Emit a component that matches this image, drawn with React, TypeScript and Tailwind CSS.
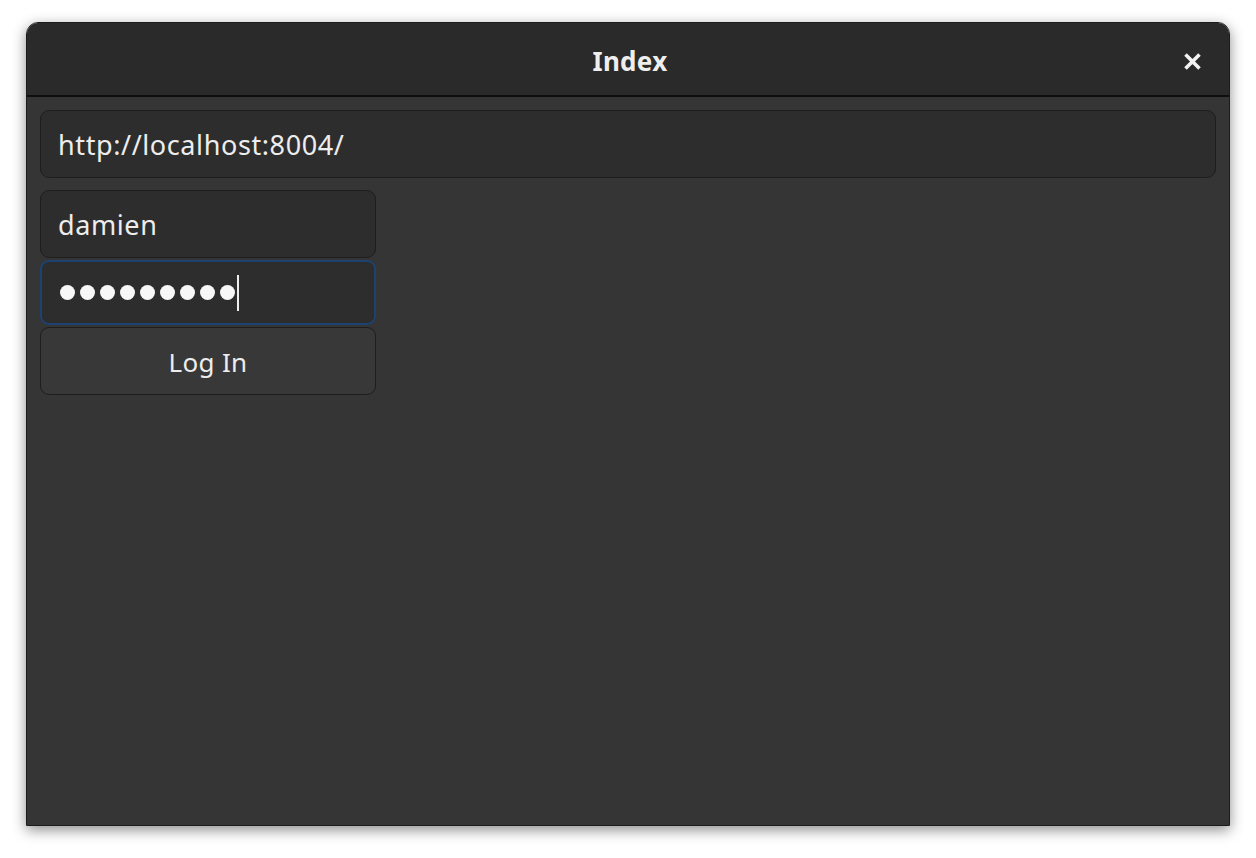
export default function App() {
  return (
    <div className="w-[1256px] h-[858px] bg-white pt-[22px] pl-[26px]" style={{ fontFamily: '"Noto Sans", sans-serif' }}>
      <div className="w-[1204px] h-[804px] flex flex-col rounded-t-[12px] overflow-hidden border border-[#1c1c1c] shadow-[0_4px_14px_rgba(0,0,0,0.45)]">
        {/* Header bar */}
        <div className="h-[74px] shrink-0 bg-[#2a2a2a] border-b-2 border-[#0e0e0e] flex items-center justify-center relative">
          <span className="text-[26px] font-bold text-[#eeeeee] tracking-[0.3px] pt-[4px] pl-[4px]">Index</span>
          <button className="absolute right-[27px] top-[28px] w-[20px] h-[20px] flex items-center justify-center">
            <svg width="19" height="19" viewBox="0 0 19 19">
              <path d="M2.5 2.5 L16.5 16.5 M16.5 2.5 L2.5 16.5" stroke="#f2f2f2" strokeWidth="3.6" strokeLinecap="butt" />
            </svg>
          </button>
        </div>

        {/* Body */}
        <div className="flex-1 bg-[#353535] px-[13px] pt-[13px] flex flex-col">
          <div className="h-[68px] rounded-[9px] bg-[#2d2d2d] border border-[#1e1e1e] flex items-center px-[17px] pt-[3px] text-[27px] tracking-[0.6px] text-[#ededed]">
            http://localhost:8004/
          </div>

          <div className="w-[336px] mt-[12px] flex flex-col gap-[2px]">
            <div className="h-[68px] rounded-[9px] bg-[#2d2d2d] border border-[#1e1e1e] flex items-center px-[17px] pt-[3px] text-[27px] tracking-[0.6px] text-[#ededed]">
              damien
            </div>
            <div className="h-[65px] rounded-[9px] bg-[#2d2d2d] border-2 border-[#1b4273] flex items-center pl-[18px] text-[#f5f5f5]">
              <div className="flex items-center gap-[5px]">
                {Array.from({ length: 9 }).map((_, i) => (
                  <span key={i} className="w-[15px] h-[15px] rounded-full bg-[#f7f7f7]" />
                ))}
              </div>
              <span className="ml-[2px] w-[2px] h-[36px] bg-[#eeeeee]" />
            </div>
            <button className="h-[68px] rounded-[9px] bg-[#383838] border border-[#1e1e1e] flex items-center justify-center pt-[3px] text-[26px] tracking-[0.3px] text-[#ededed]">
              Log In
            </button>
          </div>
        </div>
      </div>
    </div>
  );
}
